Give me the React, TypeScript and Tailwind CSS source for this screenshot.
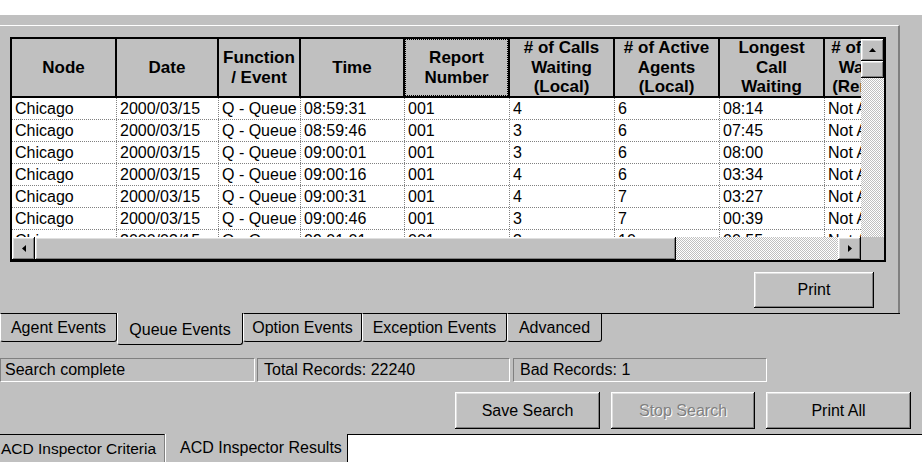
import type { ReactNode } from 'react';

const raised =
  'bg-[#c0c0c0] shadow-[inset_-1px_-1px_0_#000,inset_1px_1px_0_#fff,inset_-2px_-2px_0_#808080,inset_2px_2px_0_#dfdfdf]';
const sunken = 'border border-t-[#808080] border-l-[#808080] border-b-white border-r-white';
const checker =
  'bg-[image:repeating-conic-gradient(#c0c0c0_0_25%,#ffffff_0_50%)] bg-size-[2px_2px]';

const columns = [
  { w: 105, title: ['Node'] },
  { w: 102, title: ['Date'] },
  { w: 82, title: ['Function', '/ Event'] },
  { w: 104, title: ['Time'] },
  { w: 105, title: ['Report', 'Number'], focus: true },
  { w: 105, title: ['# of Calls', 'Waiting', '(Local)'] },
  { w: 105, title: ['# of Active', 'Agents', '(Local)'] },
  { w: 105, title: ['Longest', 'Call', 'Waiting'] },
  { w: 90, title: ['# of Calls', 'Waiting', '(Remote)'] },
];

const rows = [
  ['Chicago', '2000/03/15', 'Q - Queue', '08:59:31', '001', '4', '6', '08:14', 'Not Available'],
  ['Chicago', '2000/03/15', 'Q - Queue', '08:59:46', '001', '3', '6', '07:45', 'Not Available'],
  ['Chicago', '2000/03/15', 'Q - Queue', '09:00:01', '001', '3', '6', '08:00', 'Not Available'],
  ['Chicago', '2000/03/15', 'Q - Queue', '09:00:16', '001', '4', '6', '03:34', 'Not Available'],
  ['Chicago', '2000/03/15', 'Q - Queue', '09:00:31', '001', '4', '7', '03:27', 'Not Available'],
  ['Chicago', '2000/03/15', 'Q - Queue', '09:00:46', '001', '3', '7', '00:39', 'Not Available'],
  ['Chicago', '2000/03/15', 'Q - Queue', '09:01:01', '001', '3', '10', '00:55', 'Not Available'],
];

function Arrow({ dir }: { dir: 'up' | 'left' | 'right' }) {
  const pts = {
    up: '3.5,0 7,4 0,4',
    left: '0,3.5 4,0 4,7',
    right: '4,3.5 0,0 0,7',
  }[dir];
  const size = dir === 'up' ? { w: 7, h: 4 } : { w: 4, h: 7 };
  return (
    <svg width={size.w} height={size.h} viewBox={`0 0 ${size.w} ${size.h}`}>
      <polygon points={pts} fill="#000" />
    </svg>
  );
}

function Button({ label, w, disabled }: { label: string; w: string; disabled?: boolean }) {
  return (
    <div className={`${raised} ${w} h-[37px] flex items-center justify-center text-[16px]`}>
      <span className={disabled ? 'text-[#808080] [text-shadow:1px_1px_0_#fff]' : 'text-black'}>{label}</span>
    </div>
  );
}

function Tab({ children, w, selected }: { children: ReactNode; w: string; selected?: boolean }) {
  if (selected) {
    return (
      <div className={`${w} h-[32px] border-l border-l-white border-r border-r-black border-b border-b-black rounded-b-[3px] flex items-center justify-center pt-[2px] text-[16px]`}>
        {children}
      </div>
    );
  }
  return (
    <div className={`${w} h-[29px] border-t border-t-black border-l border-l-white border-r border-r-black border-b border-b-black rounded-b-[3px] flex items-center justify-center text-[16px]`}>
      {children}
    </div>
  );
}

function Grid() {
  return (
    <div className="ml-[10px] mt-[11px] w-[876px] h-[225px] border-2 border-black bg-white flex flex-col">
      <div className="flex h-[198px]">
        <div className="w-[849px] overflow-hidden">
          {/* header */}
          <div className="flex h-[59px] border-b-2 border-black bg-[#c0c0c0]">
            {columns.map((c, i) => (
              <div
                key={i}
                style={{ width: c.w }}
                className="shrink-0 border-r-2 border-black flex items-center justify-center overflow-hidden"
              >
                <div
                  className={`w-full h-full flex flex-col items-center justify-center text-center text-[17px] leading-[19.5px] font-bold whitespace-nowrap ${
                    c.focus ? 'outline-1 outline-dotted outline-black -outline-offset-1' : ''
                  }`}
                >
                  {c.title.map((t) => (
                    <span key={t}>{t}</span>
                  ))}
                </div>
              </div>
            ))}
          </div>
          {/* rows */}
          <div className="h-[139px] overflow-hidden">
            {rows.map((r, ri) => (
              <div key={ri} className="flex h-[22px] border-b border-dotted border-[#808080]">
                {r.map((v, ci) => (
                  <div
                    key={ci}
                    style={{ width: columns[ci].w }}
                    className="shrink-0 border-r border-dotted border-[#808080] pl-[3px] text-[16px] leading-[21px] whitespace-nowrap overflow-hidden"
                  >
                    {v}
                  </div>
                ))}
              </div>
            ))}
          </div>
        </div>
        {/* vertical scrollbar */}
        <div className="w-[23px] flex flex-col">
          <div className={`${raised} h-[22px] flex items-center justify-center`}>
            <Arrow dir="up" />
          </div>
          <div className={`${raised} h-[17px]`} />
          <div className={`flex-1 ${checker}`} />
        </div>
      </div>
      {/* horizontal scrollbar */}
      <div className="flex h-[23px]">
        <div className={`${raised} w-[23px] flex items-center justify-center`}>
          <Arrow dir="left" />
        </div>
        <div className={`${raised} w-[641px]`} />
        <div className={`w-[162px] ${checker}`} />
        <div className={`${raised} w-[23px] flex items-center justify-center`}>
          <Arrow dir="right" />
        </div>
        <div className="w-[23px] bg-[#c0c0c0]" />
      </div>
    </div>
  );
}

export default function App() {
  return (
    <div className="w-[922px] h-[462px] bg-white overflow-hidden font-['Liberation_Sans',Arial,sans-serif] text-black">
      <div className="h-[15px] bg-white" />
      <div className="h-[419px] bg-[#c0c0c0] pt-[10px] flex flex-col">
        {/* results panel */}
        <div className="w-[900px] h-[288px] border-t border-white border-r-2 border-r-[#808080] flex flex-col">
          <Grid />
          <div className="flex justify-end pr-[24px] mt-[10px]">
            <div className={`${raised} w-[120px] h-[36px] flex items-center justify-center text-[16px]`}>Print</div>
          </div>
        </div>

        {/* event tabs */}
        <div className="flex items-start w-[900px] h-[32px]">
          <Tab w="w-[117px]">Agent Events</Tab>
          <Tab w="w-[126px]" selected>
            Queue Events
          </Tab>
          <Tab w="w-[119px]">Option Events</Tab>
          <Tab w="w-[145px]">Exception Events</Tab>
          <Tab w="w-[95px]">Advanced</Tab>
          <div className="flex-1 border-t border-black" />
        </div>

        {/* status fields */}
        <div className="flex mt-[13px] h-[24px] text-[16px] leading-[22px]">
          <div className={`${sunken} w-[255px] pl-[4px]`}>Search complete</div>
          <div className={`${sunken} w-[253px] ml-[2px] pl-[6px]`}>Total Records: 22240</div>
          <div className={`${sunken} w-[254px] ml-[3px] pl-[6px]`}>Bad Records: 1</div>
        </div>

        {/* actions */}
        <div className="flex justify-end gap-[11px] pr-[11px] mt-[10px]">
          <Button label="Save Search" w="w-[145px]" />
          <Button label="Stop Search" w="w-[144px]" disabled />
          <Button label="Print All" w="w-[145px]" />
        </div>
      </div>

      {/* page tabs */}
      <div className="flex h-[28px] text-[16px]">
        <div className="w-[165px] bg-[#c0c0c0] border-t border-black border-r border-r-[#808080] pl-[1px] flex items-center whitespace-nowrap overflow-hidden text-[15.5px]">
          ACD Inspector Criteria
        </div>
        <div className="w-[182px] bg-[#c0c0c0] border-l border-white pl-[14px] flex items-center whitespace-nowrap">
          ACD Inspector Results
        </div>
        <div className="flex-1 bg-white border-t border-l border-black" />
      </div>
    </div>
  );
}
